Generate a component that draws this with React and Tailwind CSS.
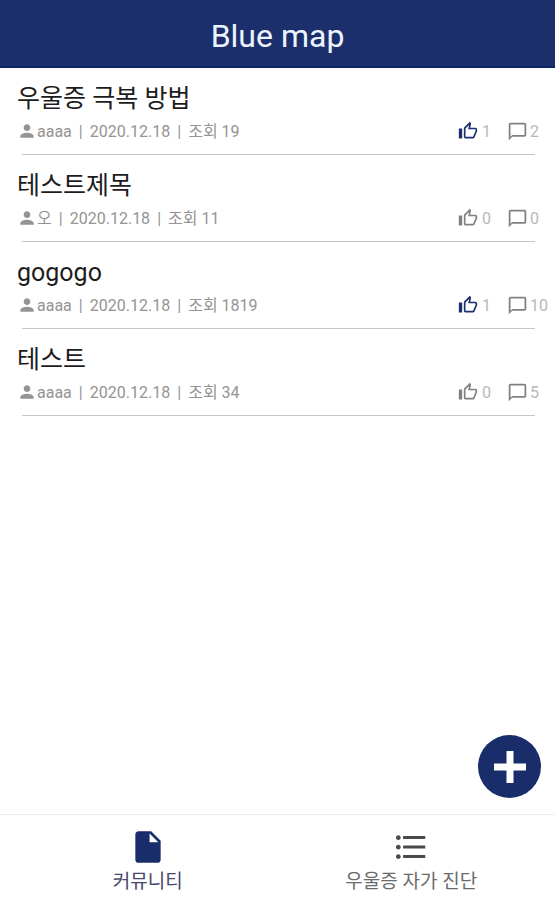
import React from "react";
import { MdChatBubbleOutline, MdFormatListBulleted, MdInsertDriveFile, MdPerson } from "react-icons/md";

const posts = [
  { id: 1, title: "우울증 극복 방법", author: "aaaa", date: "2020.12.18", views: 19, likes: 1, liked: true, comments: 2 },
  { id: 2, title: "테스트제목", author: "오", date: "2020.12.18", views: 11, likes: 0, liked: false, comments: 0 },
  { id: 3, title: "gogogo", author: "aaaa", date: "2020.12.18", views: 1819, likes: 1, liked: true, comments: 10 },
  { id: 4, title: "테스트", author: "aaaa", date: "2020.12.18", views: 34, likes: 0, liked: false, comments: 5 },
];

function ThumbIcon({ className }) {
  return (
    <svg viewBox="0 0 24 24" fill="currentColor" className={className} aria-hidden="true">
      <path d="M5 9v12H1V9h4m4 12a2 2 0 0 1-2-2V9c0-.55.22-1.05.59-1.41L14.17 1l1.06 1.06c.27.27.44.65.44 1.05l-.03.32L14.69 8H21a2 2 0 0 1 2 2v2c0 .26-.05.5-.14.73l-3.02 7.05C19.54 20.5 18.83 21 18 21H9m0-2h9.03L21 12v-2h-8.79l1.13-5.32L9 9.03V19z" />
    </svg>
  );
}

function Separator() {
  return <span className="w-[18px] text-center">|</span>;
}

function PostRow({ post }) {
  return (
    <li className="pt-[13px]">
      <h2 className="px-[17px] text-[25px] leading-9 text-[#1c1c1c]">
        <a href={`#post-${post.id}`}>{post.title}</a>
      </h2>

      <div className="mt-0.5 flex h-6 items-center justify-between pl-[17px] text-base text-[#949494]">
        <div className="flex items-center">
          <MdPerson size={20} className="shrink-0" />
          <div className="flex pt-0.5">
            <span>{post.author}</span>
            <Separator />
            <span>{post.date}</span>
            <Separator />
            <span>조회 {post.views}</span>
          </div>
        </div>

        <div className="flex shrink-0 items-center text-[#b8b8b8]">
          <button type="button" className="flex w-[49px] items-center gap-1" aria-label={`좋아요 ${post.likes}`}>
            <ThumbIcon className={post.liked ? "size-5 text-[#1c2e6e]" : "size-5 text-[#808080]"} />
            <span className="pt-0.5">{post.likes}</span>
          </button>
          <div className="flex w-12 items-center gap-0.5">
            <MdChatBubbleOutline size={21} className="shrink-0 text-[#808080]" />
            <span className="pt-0.5">{post.comments}</span>
          </div>
        </div>
      </div>

      <hr className="mt-[11px] mr-5 ml-[22px] border-[#c6c6c6]" />
    </li>
  );
}

function App() {
  return (
    <div className="flex min-h-screen flex-col bg-white font-['Roboto','Noto_Sans_CJK_KR',sans-serif]">
      <header className="flex h-17 items-center justify-center border-b-2 border-[#0b2463] bg-[#1c2f6d] pt-1.5">
        <h1 className="text-[32px] leading-10 text-[#eef4ff]">Blue map</h1>
      </header>

      <main className="relative flex-1">
        <ul>
          {posts.map((post) => (
            <PostRow key={post.id} post={post} />
          ))}
        </ul>

        <button
          type="button"
          className="absolute right-3.5 bottom-4 flex size-[63px] items-center justify-center rounded-full bg-[#1a2d6b] text-white"
          aria-label="글쓰기"
        >
          <svg viewBox="0 0 32 32" className="size-8" fill="none" stroke="currentColor" strokeWidth="7" aria-hidden="true">
            <path d="M16 0v32M0 16h32" />
          </svg>
        </button>
      </main>

      <nav className="grid grid-cols-2 border-t border-[#ececec] pt-[13px] pr-3 pb-1 pl-4 text-[19px] leading-7">
        <a href="#community" className="flex flex-col items-center gap-0.5 text-[#1a2d6b]" aria-current="page">
          <MdInsertDriveFile size={38} />
          <span className="text-[#45466b]">커뮤니티</span>
        </a>
        <a href="#self-check" className="flex flex-col items-center gap-0.5 text-[#4a4a4a]">
          <MdFormatListBulleted size={38} />
          <span className="text-[#6b6b6b]">우울증 자가 진단</span>
        </a>
      </nav>
    </div>
  );
}

export default App;
